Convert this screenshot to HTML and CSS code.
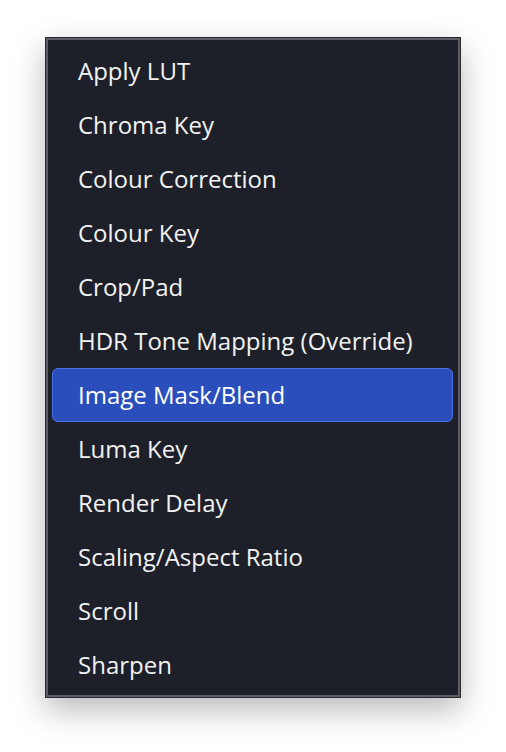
FILE: index.html
```html
<!DOCTYPE html>
<html>
<head>
<meta charset="utf-8">
<link rel="stylesheet" href="styles.css">
</head>
<body>
<div class="menu">
  <div class="item">Apply LUT</div>
  <div class="item">Chroma Key</div>
  <div class="item">Colour Correction</div>
  <div class="item">Colour Key</div>
  <div class="item">Crop/Pad</div>
  <div class="item">HDR Tone Mapping (Override)</div>
  <div class="item active">Image Mask/Blend</div>
  <div class="item">Luma Key</div>
  <div class="item">Render Delay</div>
  <div class="item">Scaling/Aspect Ratio</div>
  <div class="item">Scroll</div>
  <div class="item">Sharpen</div>
</div>
</body>
</html>
```
FILE: styles.css
```css
html, body {
  margin: 0;
  padding: 0;
  background: #ffffff;
}
body {
  width: 506px;
  height: 752px;
  font-family: "Open Sans", sans-serif;
}
.menu {
  box-sizing: border-box;
  margin: 37px 0 0 45px;
  width: 416px;
  height: 661px;
  background: #1d2029;
  border: 1px solid #2a2a2e;
  box-shadow: inset 0 0 0 2px #5b5e69, 0 12px 30px rgba(0, 0, 0, 0.28);
  padding: 6px 7px 5px 6px;
  display: flex;
  flex-direction: column;
}
.item {
  box-sizing: border-box;
  height: 54px;
  display: flex;
  align-items: center;
  padding-left: 25px;
  padding-bottom: 2px;
  font-size: 24px;
  color: #f2f2f2;
  border: 1px solid transparent;
  border-radius: 6px;
}
.item.active {
  background: #2a4fbd;
  border-color: #4b72e6;
  color: #ffffff;
}
```
